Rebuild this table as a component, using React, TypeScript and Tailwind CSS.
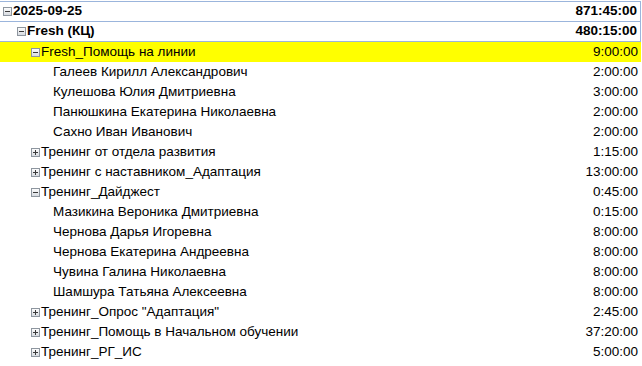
type Row = {
  label: string;
  value: string;
  level: number;
  toggle?: '+' | '-';
  bold?: boolean;
  highlight?: boolean;
};

const rows: Row[] = [
  { label: '2025-09-25', value: '871:45:00', level: 0, toggle: '-', bold: true },
  { label: 'Fresh (КЦ)', value: '480:15:00', level: 1, toggle: '-', bold: true },
  { label: 'Fresh_Помощь на линии', value: '9:00:00', level: 2, toggle: '-', highlight: true },
  { label: 'Галеев Кирилл Александрович', value: '2:00:00', level: 3 },
  { label: 'Кулешова Юлия Дмитриевна', value: '3:00:00', level: 3 },
  { label: 'Панюшкина Екатерина Николаевна', value: '2:00:00', level: 3 },
  { label: 'Сахно Иван Иванович', value: '2:00:00', level: 3 },
  { label: 'Тренинг от отдела развития', value: '1:15:00', level: 2, toggle: '+' },
  { label: 'Тренинг с наставником_Адаптация', value: '13:00:00', level: 2, toggle: '+' },
  { label: 'Тренинг_Дайджест', value: '0:45:00', level: 2, toggle: '-' },
  { label: 'Мазикина Вероника Дмитриевна', value: '0:15:00', level: 3 },
  { label: 'Чернова Дарья Игоревна', value: '8:00:00', level: 3 },
  { label: 'Чернова Екатерина Андреевна', value: '8:00:00', level: 3 },
  { label: 'Чувина Галина Николаевна', value: '8:00:00', level: 3 },
  { label: 'Шамшура Татьяна Алексеевна', value: '8:00:00', level: 3 },
  { label: 'Тренинг_Опрос "Адаптация"', value: '2:45:00', level: 2, toggle: '+' },
  { label: 'Тренинг_Помощь в Начальном обучении', value: '37:20:00', level: 2, toggle: '+' },
  { label: 'Тренинг_РГ_ИС', value: '5:00:00', level: 2, toggle: '+' },
];

const indent = ['pl-[3px]', 'pl-[17px]', 'pl-[31px]', 'pl-[53px]'];

function Toggle({ kind }: { kind: '+' | '-' }) {
  return (
    <svg width="9" height="9" viewBox="0 0 9 9" className="mr-[1px] shrink-0">
      <defs>
        <linearGradient id="tg" x1="0" y1="0" x2="0" y2="1">
          <stop offset="0" stopColor="#ffffff" />
          <stop offset="1" stopColor="#d4d8de" />
        </linearGradient>
      </defs>
      <rect x="0.5" y="0.5" width="8" height="8" fill="url(#tg)" stroke="#8e969f" />
      <rect x="2" y="4" width="5" height="1" fill="#3a3a3a" />
      {kind === '+' && <rect x="4" y="2" width="1" height="5" fill="#3a3a3a" />}
    </svg>
  );
}

export default function App() {
  return (
    <div className="h-[366px] w-[642px] overflow-hidden bg-white pt-px font-['Liberation_Sans',sans-serif] text-[13.5px] text-black">
      <div className="w-[641px] border-t border-[#9bb5dc]">
        {rows.map((r) => (
          <div
            key={r.label}
            className={`flex h-[20px] items-center justify-between pr-[3px] ${indent[r.level]} ${
              r.bold ? 'border-b border-r border-[#9bb5dc] font-bold' : ''
            } ${r.highlight ? 'bg-[#ffff00]' : ''}`}
          >
            <div className="flex items-center whitespace-nowrap">
              {r.toggle && <Toggle kind={r.toggle} />}
              <span>{r.label}</span>
            </div>
            <span className="whitespace-nowrap">{r.value}</span>
          </div>
        ))}
      </div>
    </div>
  );
}
